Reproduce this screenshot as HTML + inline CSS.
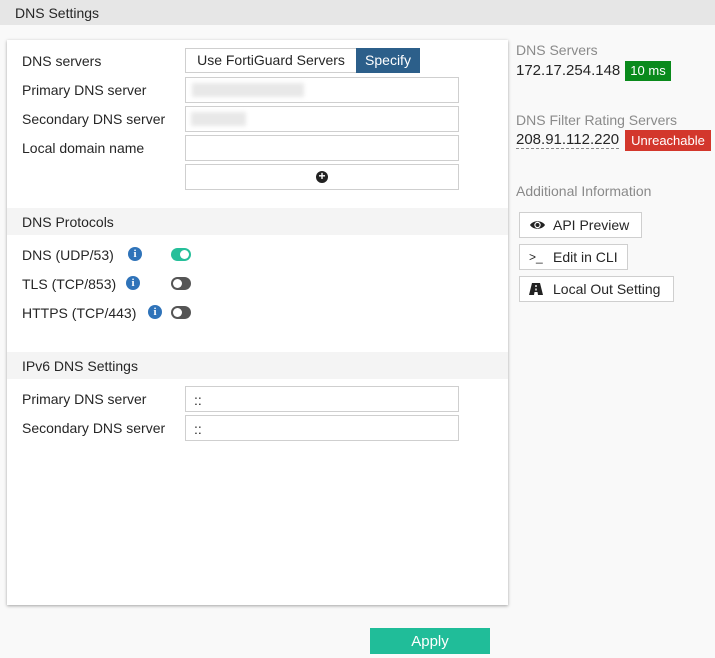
<!DOCTYPE html>
<html><head><style>
body{margin:0;width:715px;height:658px;background:#f9f9f9;font-family:"Liberation Sans",sans-serif;font-size:14px;color:#262626;position:relative;overflow:hidden}
.a{position:absolute;white-space:nowrap}
.hdr{left:0;top:0;width:715px;height:25px;background:#e6e6e6}
.panel{left:7px;top:40px;width:501px;height:565px;background:#fff;box-shadow:0 1px 3px rgba(0,0,0,.35)}
.inp{position:absolute;left:185px;width:272px;height:24px;border:1px solid #cfcfcf;background:#fff}
.sec{position:absolute;left:7px;width:501px;height:27px;background:#f4f4f4}
.tog{position:absolute;width:20px;height:13px;border-radius:7px;background:#555}
.tog::after{content:"";position:absolute;left:2px;top:2px;width:9px;height:9px;border-radius:50%;background:#fff}
.tog.on{background:#26bf9a}.tog.on::after{left:9px}
.info{position:absolute;width:14px;height:14px;border-radius:50%;background:#2f73b9;color:#fff;font-size:11px;font-weight:bold;text-align:center;line-height:14px;font-family:"Liberation Serif",serif}
.btn{position:absolute;left:519px;height:24px;border:1px solid #cfcfcf;background:#fff;line-height:24px;font-size:14px}
.gray{color:#8a8a8a}
</style></head><body>
<div class="a hdr"></div>
<div class="a" style="left:15px;top:5px;font-size:14px">DNS Settings</div>
<div class="a panel"></div>
<div class="a" style="left:22px;top:53px">DNS servers</div>
<div class="a" style="left:185px;top:48px;width:170px;height:23px;border:1px solid #cfcfcf;line-height:23px;text-align:center;background:#fff">Use FortiGuard Servers</div>
<div class="a" style="left:356px;top:48px;width:64px;height:25px;background:#2c5f8a;color:#fff;line-height:25px;text-align:center">Specify</div>
<div class="a" style="left:22px;top:82px">Primary DNS server</div>
<div class="inp" style="top:77px"><div style="position:absolute;left:6px;top:5px;width:112px;height:14px;background:#e8e8e8;filter:blur(2px)"></div></div>
<div class="a" style="left:22px;top:111px">Secondary DNS server</div>
<div class="inp" style="top:106px"><div style="position:absolute;left:5px;top:5px;width:55px;height:14px;background:#e8e8e8;filter:blur(2px)"></div></div>
<div class="a" style="left:22px;top:140px">Local domain name</div>
<div class="inp" style="top:135px"></div>
<div class="inp" style="top:164px"><div style="position:absolute;left:130px;top:6px;width:12px;height:12px;border-radius:50%;background:#222;color:#fff;font-size:12px;line-height:11px;text-align:center;font-weight:bold">+</div></div>
<div class="sec" style="top:208px"></div>
<div class="a" style="left:22px;top:214px">DNS Protocols</div>
<div class="a" style="left:22px;top:247px">DNS (UDP/53)</div><div class="info" style="left:128px;top:247px">i</div><div class="tog on" style="left:171px;top:248px"></div>
<div class="a" style="left:22px;top:276px">TLS (TCP/853)</div><div class="info" style="left:126px;top:276px">i</div><div class="tog" style="left:171px;top:277px"></div>
<div class="a" style="left:22px;top:305px">HTTPS (TCP/443)</div><div class="info" style="left:148px;top:305px">i</div><div class="tog" style="left:171px;top:306px"></div>
<div class="sec" style="top:352px"></div>
<div class="a" style="left:22px;top:358px">IPv6 DNS Settings</div>
<div class="a" style="left:22px;top:391px">Primary DNS server</div>
<div class="inp" style="top:386px"><span style="position:absolute;left:8px;top:5px">::</span></div>
<div class="a" style="left:22px;top:420px">Secondary DNS server</div>
<div class="inp" style="top:415px"><span style="position:absolute;left:8px;top:5px">::</span></div>
<div class="a" style="left:370px;top:628px;width:120px;height:26px;background:#20bd99;color:#fff;text-align:center;line-height:27px;font-size:15px">Apply</div>
<div class="a gray" style="left:516px;top:42px">DNS Servers</div>
<div class="a" style="left:516px;top:62px;font-size:15px">172.17.254.148</div>
<div class="a" style="left:625px;top:61px;width:46px;height:20px;background:#0a8a1c;color:#fff;font-size:13px;line-height:20px;text-align:center">10 ms</div>
<div class="a gray" style="left:516px;top:112px">DNS Filter Rating Servers</div>
<div class="a" style="left:516px;top:131px;font-size:15px;border-bottom:1px dashed #888">208.91.112.220</div>
<div class="a" style="left:625px;top:130px;width:86px;height:21px;background:#d3372c;color:#fff;font-size:13px;line-height:21px;text-align:center">Unreachable</div>
<div class="a gray" style="left:516px;top:183px">Additional Information</div>
<div class="btn" style="top:212px;width:121px"><svg style="position:absolute;left:9px;top:6px" width="17" height="12" viewBox="0 0 17 12"><path d="M1 6C4 1 13 1 16 6C13 11 4 11 1 6Z" fill="#222"/><circle cx="8.5" cy="6" r="3.2" fill="#fff"/><circle cx="8.5" cy="6" r="2" fill="#222"/></svg><span style="position:absolute;left:33px">API Preview</span></div>
<div class="btn" style="top:244px;width:107px"><span style="position:absolute;left:9px;font-size:12px">&gt;_</span><span style="position:absolute;left:33px">Edit in CLI</span></div>
<div class="btn" style="top:276px;width:153px"><svg style="position:absolute;left:9px;top:6px" width="14" height="12" viewBox="0 0 14 12"><path d="M3 0H11L14 12H9L8.5 9H5.5L5 12H0Z" fill="#222"/><rect x="6.3" y="2" width="1.4" height="2" fill="#fff"/><rect x="6.3" y="5.5" width="1.4" height="2" fill="#fff"/></svg><span style="position:absolute;left:33px">Local Out Setting</span></div>
</body></html>
